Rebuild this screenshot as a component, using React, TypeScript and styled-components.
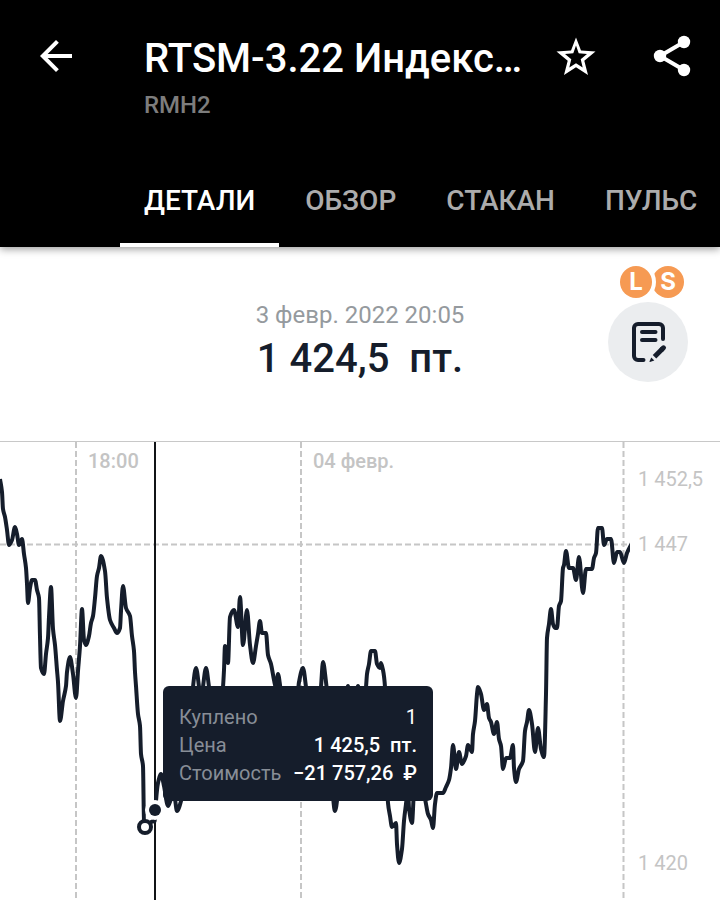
import React from "react";
import styled, { createGlobalStyle } from "styled-components";

const INK = "#151d2b";

const GlobalStyle = createGlobalStyle`
  *, *::before, *::after { box-sizing: border-box; }
  body {
    margin: 0;
    background: #fff;
    color: ${INK};
    font-family: Roboto, "Noto Sans", sans-serif;
    overflow-x: hidden;
  }
  button { font: inherit; border: 0; padding: 0; background: none; cursor: pointer; }
  h1, p, dl, dd, dt { margin: 0; }
  svg { display: block; }
`;

const Header = styled.header`
  position: relative;
  background: #000;
  color: #fff;
  box-shadow: 0 2px 8px rgba(0, 0, 0, 0.4);
`;

const AppBar = styled.div`
  display: flex;
  align-items: flex-start;
  padding: 32px 24px 32px 32px;
`;

const IconButton = styled.button`
  display: grid;
  place-items: center;
  flex: none;
  width: 48px;
  height: 48px;
  color: #fff;
`;

const Heading = styled.div`
  flex: 1;
  min-width: 0;
  padding: 3px 0 0 64px;
`;

const Title = styled.h1`
  font-size: 40px;
  line-height: 48px;
  font-weight: 500;
  white-space: nowrap;
  overflow: hidden;
  text-overflow: ellipsis;
`;

const Ticker = styled.p`
  margin-top: 8px;
  font-size: 24px;
  line-height: 28px;
  font-weight: 500;
  color: #7d7d7d;
`;

const Actions = styled.div`
  display: flex;
  gap: 48px;
  padding-left: 24px;
`;

const Tabs = styled.nav`
  display: flex;
  gap: 2px;
  padding-left: 120px;
  overflow: hidden;
`;

const Tab = styled.button<{ $active?: boolean }>`
  flex: none;
  height: 96px;
  padding: 8px 24px 0;
  border-bottom: 4px solid ${(p) => (p.$active ? "#fff" : "transparent")};
  font-size: 28px;
  line-height: 32px;
  font-weight: 500;
  color: ${(p) => (p.$active ? "#fff" : "#acacac")};
`;

const Summary = styled.section`
  display: grid;
  grid-template-columns: 1fr auto 1fr;
  align-items: start;
  padding: 19px 32px 58px;
`;

const Quote = styled.div`
  grid-column: 2;
  padding-top: 35px;
  text-align: center;
`;

const QuoteTime = styled.p`
  font-size: 24px;
  line-height: 28px;
  color: #959a9e;
`;

const QuotePrice = styled.p`
  margin-top: 6px;
  font-size: 40px;
  line-height: 48px;
  font-weight: 500;
  white-space: pre;
`;

const Side = styled.div`
  display: flex;
  flex-direction: column;
  align-items: flex-end;
  gap: 4px;
`;

const Badges = styled.div`
  display: flex;
  padding-right: 4px;
`;

const Badge = styled.span<{ $front?: boolean }>`
  position: relative;
  z-index: ${(p) => (p.$front ? 1 : 0)};
  width: 32px;
  height: 32px;
  border-radius: 50%;
  background: #f69a53;
  box-shadow: ${(p) => (p.$front ? "0 0 0 4px #fff" : "none")};
  color: #fff;
  font-family: Inter, Roboto, sans-serif;
  font-size: 24px;
  line-height: 32px;
  font-weight: 700;
  text-align: center;
`;

const NoteButton = styled.button`
  width: 80px;
  height: 80px;
  border-radius: 50%;
  background: #ebedef;
  color: ${INK};
`;

const ChartArea = styled.section`
  position: relative;
  border-top: 1px solid #c8c8c8;
`;

const ChartSvg = styled.svg`
  width: 100%;
  height: auto;
`;

const AxisText = styled.text<{ $strong?: boolean }>`
  fill: #c4c4c4;
  font-size: 20px;
  font-weight: ${(p) => (p.$strong ? 500 : 400)};
`;

const Tooltip = styled.dl`
  position: absolute;
  left: 163px;
  top: 244px;
  width: 270px;
  padding: 17px 16px 14px;
  border-radius: 6px;
  background: ${INK};
  font-size: 20px;
  line-height: 28px;
`;

const TooltipRow = styled.div`
  display: flex;
  justify-content: space-between;
`;

const TooltipLabel = styled.dt`
  color: #888e97;
`;

const TooltipValue = styled.dd<{ $light?: boolean }>`
  color: #fff;
  font-weight: ${(p) => (p.$light ? 400 : 500)};
  white-space: pre;
`;

const TABS = ["ДЕТАЛИ", "ОБЗОР", "СТАКАН", "ПУЛЬС"];

const DEAL = [
  { label: "Куплено", value: "1", light: true },
  { label: "Цена", value: "1 425,5  пт." },
  { label: "Стоимость", value: "−21 757,26  ₽" },
];

const PRICES =
  "0,37 2,50 3,67 5,75 7,88 9,103 12,98 15,85 17,92 19,103 22,97 24,112 26,126 27,142 28,161 30,146 32,138 35,138 37,148 39,156 40,195 41,226 44,232 46,212 48,196 49,175 51,145 53,187 55,203 57,228 58,240 60,279 63,259 66,244 67,230 70,215 73,232 76,256 78,229 80,204 82,167 84,198 86,203 89,194 91,181 93,174 95,156 97,134 99,126 101,114 105,129 107,156 110,178 114,186 117,191 120,186 121,169 123,144 126,166 130,174 132,194 134,209 135,230 136,244 138,272 140,284 141,312 143,324 144,379 148,384 151,380 155,379 156,359 158,341 161,332 164,344 168,364 171,357 174,352 177,369 181,359 186,330 190,290 193,245 196,226 199,245 201,265 203,245 206,226 209,245 214,280 220,270 223,245 224,228 225,204 228,221 230,175 234,168 238,185 240,155 243,203 247,168 250,203 253,221 256,204 258,192 260,179 262,191 266,191 268,213 271,222 274,238 276,246 278,232 281,250 286,270 296,270 299,240 303,226 306,245 310,280 318,280 321,245 323,220 326,240 329,270 332,340 335,369 338,350 342,290 346,255 348,244 350,260 355,260 358,244 361,260 364,258 366,245 367,232 369,222 371,209 375,209 377,222 380,226 381,221 383,228 385,245 386,300 388,361 390,374 392,385 396,381 397,402 399,421 402,407 404,379 406,362 408,346 409,366 412,381 414,350 419,330 423,345 426,362 428,372 431,378 433,386 435,362 437,351 443,351 446,345 449,338 451,326 453,303 456,327 459,310 462,322 466,314 468,303 472,310 473,292 475,279 477,252 478,245 481,252 484,268 487,262 489,276 491,280 494,292 497,280 499,297 501,304 503,327 506,316 510,316 513,303 514,326 516,340 519,327 523,319 525,289 527,280 529,268 532,282 535,310 538,286 541,307 544,315 546,252 547,196 549,182 551,167 553,182 555,186 557,186 559,164 561,159 563,126 564,123 566,109 569,126 573,126 576,138 579,115 583,151 586,127 592,127 594,116 596,111 598,86 602,86 604,103 607,97 611,97 614,121 617,110 620,110 624,121 627,111 632,101";

/* Monotone cubic interpolation: the curve is level at every local high and low. */
function smoothPath(source: string): string {
  const pts = source.split(" ").map((pair) => pair.split(",").map(Number));
  const slope = (i: number) =>
    (pts[i + 1][1] - pts[i][1]) / (pts[i + 1][0] - pts[i][0]);
  const tangents = pts.map((_, i) => {
    if (i === 0) return slope(0);
    if (i === pts.length - 1) return slope(i - 1);
    const a = slope(i - 1);
    const b = slope(i);
    return a * b <= 0 ? 0 : (2 * a * b) / (a + b);
  });
  let d = `M${pts[0][0]} ${pts[0][1]}`;
  for (let i = 1; i < pts.length; i++) {
    const [x0, y0] = pts[i - 1];
    const [x1, y1] = pts[i];
    const h = (x1 - x0) / 3;
    d += `C${x0 + h} ${y0 + tangents[i - 1] * h} ${x1 - h} ${y1 - tangents[i] * h} ${x1} ${y1}`;
  }
  return d;
}

const PRICE_PATH = smoothPath(PRICES);

function BackIcon() {
  return (
    <svg width="48" height="48" viewBox="0 0 24 24" fill="currentColor" aria-hidden="true">
      <path d="M20 11H7.83l5.59-5.59L12 4l-8 8 8 8 1.41-1.41L7.83 13H20v-2z" />
    </svg>
  );
}

function StarIcon() {
  return (
    <svg width="48" height="48" viewBox="0 0 48 48" fill="currentColor" aria-hidden="true">
      <path
        fillRule="evenodd"
        d="M24 5.500L29 18.500 43.500 19.500 32.300 28.800 36 43 24 35.200 12 43 15.700 28.800 4.500 19.500 19 18.500zM24 13.500L21.300 21.200 13 21.900 19.300 27.300 17.300 35.600 24 31.300 30.700 35.600 28.700 27.300 35 21.900 26.700 21.200z"
      />
    </svg>
  );
}

function ShareIcon() {
  return (
    <svg width="48" height="48" viewBox="0 0 24 24" aria-hidden="true">
      <path d="M18 5L6 12l12 7" fill="none" stroke="currentColor" strokeWidth="2" />
      <g fill="currentColor">
        <circle cx="18" cy="5" r="3.1" />
        <circle cx="6" cy="12" r="3.1" />
        <circle cx="18" cy="19" r="3.1" />
      </g>
    </svg>
  );
}

function NoteIcon() {
  return (
    <svg width="80" height="80" viewBox="0 0 80 80" fill="none" stroke="currentColor" strokeLinecap="round" aria-hidden="true">
      <path d="M55 37V26a4 4 0 0 0-4-4H30a4 4 0 0 0-4 4v28a4 4 0 0 0 4 4h5.500" strokeWidth="4" />
      <path d="M34 30h13.500M34 38h13.500" strokeWidth="4" />
      <path d="M55.500 45.800l-1.500 1.500" strokeWidth="5" />
      <path d="M54.500 46.800l-8 8" strokeWidth="5" strokeLinecap="butt" />
      <path d="M43.300 55.500l3 3-4.300 1.500q-.8 0-.5-.8z" fill="currentColor" stroke="none" />
    </svg>
  );
}

function PriceChart() {
  return (
    <ChartSvg viewBox="0 0 720 458" role="img" aria-label="График цены">
      <defs>
        <clipPath id="plot">
          <rect x="0" y="0" width="630" height="458" />
        </clipPath>
      </defs>
      <g stroke="#c6c6c6" strokeWidth="2" strokeDasharray="6 3">
        <path d="M76 0V458M301 0V458M623.500 0V458" />
        <path d="M0 102.500H630" />
      </g>
      <AxisText $strong x="88" y="26">18:00</AxisText>
      <AxisText $strong x="313" y="26">04 февр.</AxisText>
      <AxisText x="638" y="44">1 452,5</AxisText>
      <AxisText x="638" y="109">1 447</AxisText>
      <AxisText x="638" y="428">1 420</AxisText>
      <path d="M155 -1V458" stroke="#111417" strokeWidth="2" />
      <path
        d={PRICE_PATH}
        clipPath="url(#plot)"
        fill="none"
        stroke={INK}
        strokeWidth="4"
        strokeLinejoin="round"
      />
      <circle cx="155" cy="368" r="10" fill="#fff" />
      <circle cx="155" cy="368" r="6" fill={INK} />
      <circle cx="145" cy="385" r="6" fill="#fff" stroke={INK} strokeWidth="4" />
    </ChartSvg>
  );
}

export default function App() {
  return (
    <>
      <GlobalStyle />
      <Header>
        <AppBar>
          <IconButton aria-label="Назад"><BackIcon /></IconButton>
          <Heading>
            <Title>RTSM-3.22 Индекс…</Title>
            <Ticker>RMH2</Ticker>
          </Heading>
          <Actions>
            <IconButton aria-label="В избранное"><StarIcon /></IconButton>
            <IconButton aria-label="Поделиться"><ShareIcon /></IconButton>
          </Actions>
        </AppBar>
        <Tabs>
          {TABS.map((name, i) => (
            <Tab key={name} $active={i === 0}>{name}</Tab>
          ))}
        </Tabs>
      </Header>
      <main>
        <Summary>
          <Quote>
            <QuoteTime>3 февр. 2022 20:05</QuoteTime>
            <QuotePrice>{"1 424,5  пт."}</QuotePrice>
          </Quote>
          <Side>
            <Badges>
              <Badge $front>L</Badge>
              <Badge>S</Badge>
            </Badges>
            <NoteButton aria-label="Заявки"><NoteIcon /></NoteButton>
          </Side>
        </Summary>
        <ChartArea>
          <PriceChart />
          <Tooltip>
            {DEAL.map((row) => (
              <TooltipRow key={row.label}>
                <TooltipLabel>{row.label}</TooltipLabel>
                <TooltipValue $light={row.light}>{row.value}</TooltipValue>
              </TooltipRow>
            ))}
          </Tooltip>
        </ChartArea>
      </main>
    </>
  );
}
